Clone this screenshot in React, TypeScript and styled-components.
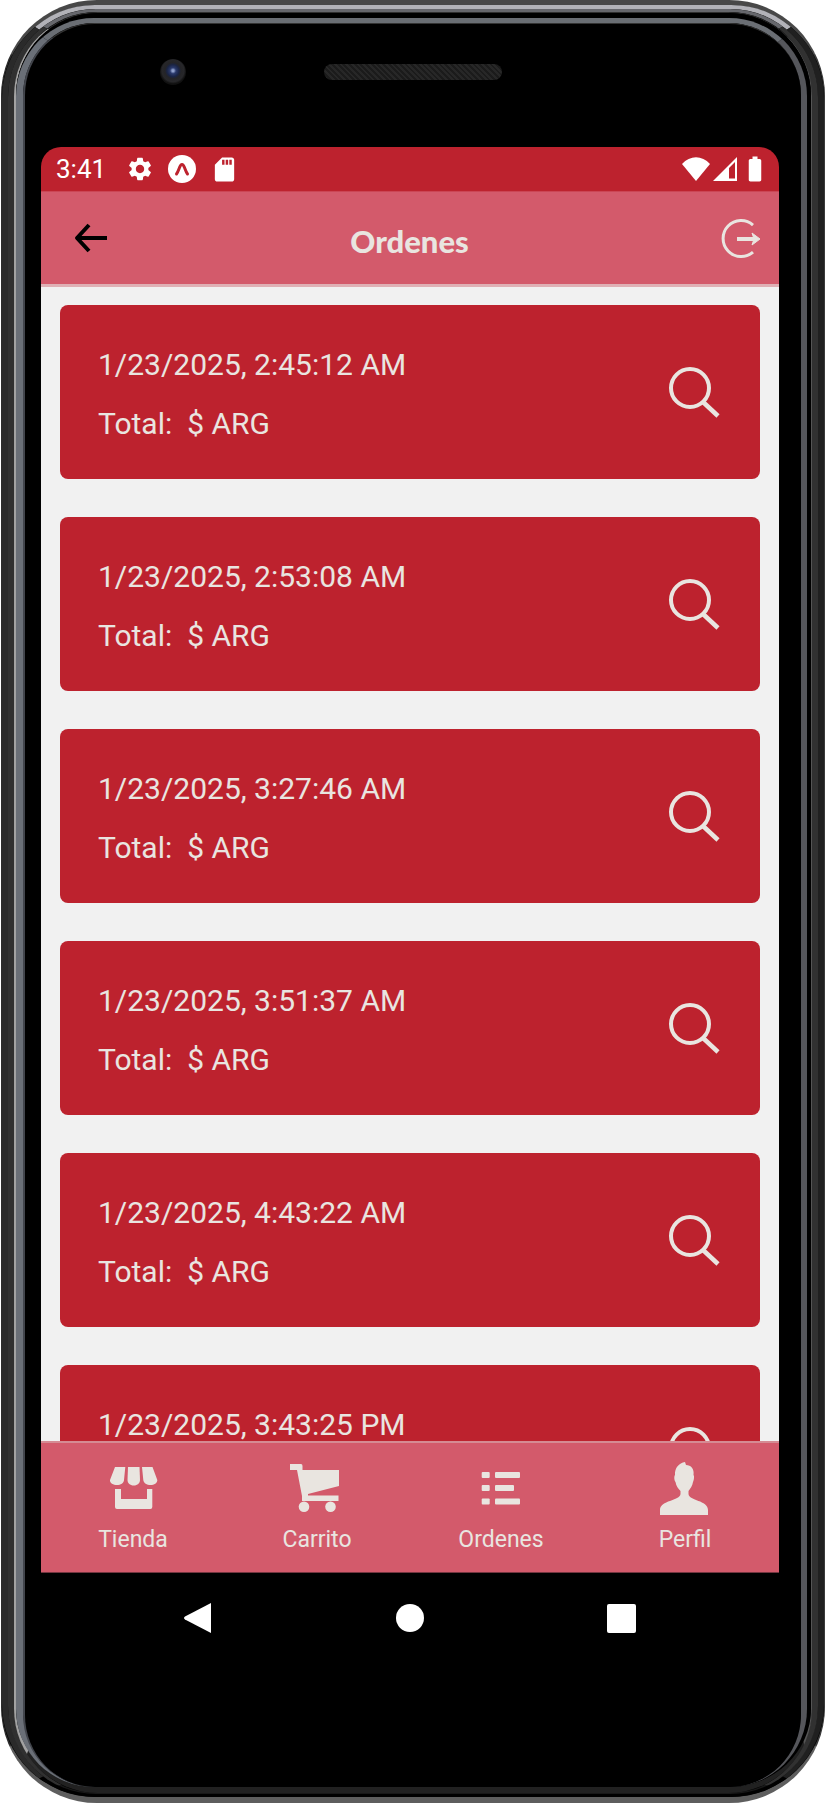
import React from 'react';
import styled, { createGlobalStyle } from 'styled-components';
import { MdBatteryFull, MdSdCard, MdSettings } from 'react-icons/md';

const color = {
  red: '#bd222e',
  pink: '#d35a6b',
  cream: '#e9e5e0',
  surface: '#f1f1f1',
};

const GlobalStyle = createGlobalStyle`
  * { box-sizing: border-box; }
  body { margin: 0; background: #fff; font-family: Roboto, sans-serif; }
  button { appearance: none; border: 0; padding: 0; margin: 0; background: none; color: inherit; font: inherit; cursor: pointer; }
  svg { display: block; flex: none; overflow: visible; }
`;

const Phone = styled.main`
  display: flex;
  flex-direction: column;
  height: 100vh;
  padding: 0 1px;
`;

const Ring = styled.div<{ $widths: string; $colors: string; $radius: number }>`
  display: flex;
  flex: 1;
  flex-direction: column;
  min-height: 0;
  background: #000;
  border-style: solid;
  border-width: ${(p) => p.$widths};
  border-color: ${(p) => p.$colors};
  border-radius: ${(p) => p.$radius}px;
`;

/* Metal case, from the outer edge to the glass. */
const rings = [
  { widths: '5px 1px 6px 1px', colors: '#484848 #3a3a3a #5e5e5e #2c2c2c', radius: 96 },
  { widths: '4px 6px 3px 6px', colors: '#b2b2b8 #202020 #000 #2a2a2a', radius: 93 },
  { widths: '3px 6px 1px 6px', colors: '#66676c #313131 #181818 #303030', radius: 88 },
  { widths: '1px 1px 6px 2px', colors: '#303030 #555 #212121 #a2a2a2', radius: 84 },
  { widths: '5px 4px 0 0', colors: '#000 #000 #000 #000', radius: 82 },
  { widths: '5px 6px 0 7px', colors: '#6a6e74 #55565b #000 #6a6f77', radius: 78 },
  { widths: '1px 0 0 2px', colors: '#333 #000 #000 #42454c', radius: 72 },
];

const Forehead = styled.div`
  display: grid;
  grid-template-columns: 1fr 178px 1fr;
  align-items: center;
  height: 123px;
  padding-bottom: 28px;
  flex: none;
`;

const Camera = styled.div`
  width: 26px;
  height: 26px;
  margin-left: 135px;
  border-radius: 50%;
  background: radial-gradient(circle at 50% 45%, #8fa0cc 0 1px, #2b3a6c 3px, #1a2445 6px, #242427 8px, #27272a 11px, #111 13px);
`;

const Speaker = styled.div`
  height: 16px;
  border-radius: 8px;
  background: repeating-linear-gradient(45deg, #1b1b1b 0 2px, #272727 2px 4px);
`;

const Screen = styled.div`
  display: flex;
  flex: 1;
  flex-direction: column;
  min-height: 0;
  margin: 0 22px 0 16px;
  border-radius: 20px 20px 0 0;
  overflow: hidden;
`;

const StatusBar = styled.div`
  display: flex;
  flex: none;
  align-items: center;
  justify-content: space-between;
  height: 44px;
  padding: 0 9px 0 15px;
  background: ${color.red};
  color: #fff;
`;

const StatusGroup = styled.div<{ $gap: number }>`
  display: flex;
  align-items: center;
  gap: ${(p) => p.$gap}px;
`;

const Clock = styled.time`
  margin-right: 6px;
  font-size: 26px;
  line-height: 32px;
`;

const Header = styled.header`
  display: grid;
  grid-template-columns: 1fr auto 1fr;
  flex: none;
  align-items: center;
  height: 96px;
  padding: 0 18px 0 33px;
  border-top: 1px solid #cb4655;
  border-bottom: 3px solid #dfb0b5;
  background: ${color.pink};
  color: ${color.cream};
`;

const Title = styled.h1`
  margin: 0 0 0 -16px;
  padding-top: 6px;
  font-family: Lato, sans-serif;
  font-size: 31px;
  font-weight: 900;
  line-height: 36px;
`;

const BackButton = styled.button`
  justify-self: start;
  color: #000;
`;

const LogoutButton = styled.button`
  justify-self: end;
`;

const OrderList = styled.ul`
  display: flex;
  flex: 1;
  flex-direction: column;
  gap: 38px;
  min-height: 0;
  margin: 0;
  padding: 18px 19px;
  background: ${color.surface};
  list-style: none;
  overflow-y: auto;
  scrollbar-width: none;
`;

const OrderCard = styled.li`
  display: flex;
  flex: none;
  align-items: center;
  justify-content: space-between;
  min-height: 174px;
  padding: 0 41px 0 38px;
  border-radius: 8px;
  background: ${color.red};
  color: ${color.cream};
`;

const OrderText = styled.div`
  align-self: flex-start;
  padding: 30px 0 26px;
`;

const OrderLine = styled.p`
  margin: 0;
  font-size: 30px;
  line-height: 59px;
  white-space: pre;
`;

const TabBar = styled.nav`
  display: grid;
  grid-template-columns: repeat(4, 1fr);
  flex: none;
  height: 132px;
  padding-right: 2px;
  border-top: 2px solid #d58b93;
  border-bottom: 1px solid #733640;
  background: ${color.pink};
`;

const Tab = styled.a`
  display: flex;
  flex-direction: column;
  align-items: center;
  gap: 12px;
  padding-top: 20px;
  color: ${color.cream};
  font-size: 23px;
  line-height: 30px;
  text-decoration: none;
`;

const SystemNav = styled.div`
  display: flex;
  flex: none;
  align-items: center;
  justify-content: center;
  gap: 183px;
  height: 90px;
  color: #fff;
`;

const Chin = styled.div`
  flex: none;
  height: 124px;
`;

const orders = [
  { date: '1/23/2025, 2:45:12 AM', total: '$ ARG' },
  { date: '1/23/2025, 2:53:08 AM', total: '$ ARG' },
  { date: '1/23/2025, 3:27:46 AM', total: '$ ARG' },
  { date: '1/23/2025, 3:51:37 AM', total: '$ ARG' },
  { date: '1/23/2025, 4:43:22 AM', total: '$ ARG' },
  { date: '1/23/2025, 3:43:25 PM', total: null },
];

const ShopIcon = () => (
  <>
    <path d="M7 4H17.3L16 17C16 20 12.500 22 9 22S1.500 20 2 17Z" />
    <path d="M20 4H31.500L32 17C32 20 29.500 22.500 25.700 22.500S19.500 20 19.500 17Z" />
    <path d="M34 4H44.500L49.300 17C49.500 20 46 22 42.500 22S35.500 20 35.300 17Z" />
    <path d="M7 26H13V36H39V26H44.300V44Q44.300 46 42.300 46H9Q7 46 7 44Z" />
  </>
);

const CartIcon = () => (
  <>
    <path d="M-2 1H9Q10.500 1 10.500 3V7H47V23L16 31V32.500H46.500V38H10V33L5 7H-2Z" />
    <circle cx="12" cy="43.700" r="5.300" />
    <circle cx="38.500" cy="43.700" r="5.300" />
  </>
);

const ListIcon = () => (
  <>
    {[
      [9, 25],
      [22, 19],
      [35.5, 25],
    ].map(([y, w]) => (
      <React.Fragment key={y}>
        <rect x="5.700" y={y} width="8" height="6" rx="1" />
        <rect x="19" y={y} width={w} height="6" rx="1" />
      </React.Fragment>
    ))}
  </>
);

const UserIcon = () => (
  <path d="M25 -1L26 2C31 2 34.500 6 33.500 12C34.500 13 34 17 33 19C32.500 23 30 26 28.500 28V31C29 38 48 37 48 47V52H0V47C0 37 20 38 20.500 31V28C18.500 26 16 23 15.500 19C14 17 14 13 15 12C14.500 5 19 0 25 -1Z" />
);

const tabs = [
  { label: 'Tienda', Icon: ShopIcon },
  { label: 'Carrito', Icon: CartIcon },
  { label: 'Ordenes', Icon: ListIcon },
  { label: 'Perfil', Icon: UserIcon },
];

const SearchIcon = () => (
  <svg width="50" height="50" fill="none" stroke="currentColor" strokeWidth="4">
    <circle cx="21" cy="21" r="19" />
    <path d="M34 35L49 49" strokeWidth="4.500" />
  </svg>
);

const ExpoIcon = () => (
  <svg width="28" height="28" viewBox="0 0 28 28">
    <circle cx="14" cy="14" r="14" fill="#fff" />
    <path d="M8.500 19C11 16 11.500 9.500 14 9.500S17 16 19.500 19" fill="none" stroke={color.red} strokeWidth="3" strokeLinecap="round" />
  </svg>
);

const OrdersScreen = () => (
  <Screen>
    <StatusBar>
      <StatusGroup $gap={14}>
        <Clock>3:41</Clock>
        <MdSettings size={28} />
        <ExpoIcon />
        <MdSdCard size={29} />
      </StatusGroup>
      <StatusGroup $gap={3}>
        <svg width="28" height="24" fill="currentColor">
          <path d="M0 7C8 -2 20 -2 28 7L14 24Z" />
        </svg>
        <svg width="24" height="24" fill="currentColor">
          <path fillRule="evenodd" d="M24 0V24H0ZM16 11V21.500H22V5Z" />
        </svg>
        <MdBatteryFull size={30} />
      </StatusGroup>
    </StatusBar>
    <Header>
      <BackButton aria-label="Volver">
        <svg width="33" height="28" fill="none" stroke="currentColor" strokeWidth="4">
          <path d="M15 1L3 14L15 27M3 14H33" strokeLinejoin="round" />
        </svg>
      </BackButton>
      <Title>Ordenes</Title>
      <LogoutButton aria-label="Cerrar sesión">
        <svg width="40" height="38" fill="none" stroke="currentColor" strokeWidth="3">
          <path d="M32 6A18 18 0 1 0 32 33" />
          <path d="M31 14L39 20L31 26L33 20Z" fill="currentColor" strokeWidth="1" />
          <path d="M16 20H36" strokeWidth="4" />
        </svg>
      </LogoutButton>
    </Header>
    <OrderList>
      {orders.map(({ date, total }) => (
        <OrderCard key={date}>
          <OrderText>
            <OrderLine>{date}</OrderLine>
            {total && <OrderLine>{`Total:  ${total}`}</OrderLine>}
          </OrderText>
          <button aria-label={`Ver orden ${date}`}>
            <SearchIcon />
          </button>
        </OrderCard>
      ))}
    </OrderList>
    <TabBar>
      {tabs.map(({ label, Icon }) => (
        <Tab key={label} href={`#${label.toLowerCase()}`}>
          <svg width="50" height="50" viewBox="0 0 50 50" fill="currentColor">
            <Icon />
          </svg>
          {label}
        </Tab>
      ))}
    </TabBar>
    <SystemNav>
      <button aria-label="Atrás">
        <svg width="28" height="32" fill="currentColor">
          <path d="M26 1V31L0 17.500Q-2 16 0 14.500Z" />
        </svg>
      </button>
      <button aria-label="Inicio">
        <svg width="28" height="28" fill="currentColor">
          <circle cx="14" cy="14" r="14" />
        </svg>
      </button>
      <button aria-label="Recientes">
        <svg width="28" height="28" fill="currentColor">
          <rect width="29" height="29" rx="2" />
        </svg>
      </button>
    </SystemNav>
    <Chin />
  </Screen>
);

export default function App() {
  const face = (
    <>
      <Forehead>
        <Camera />
        <Speaker />
      </Forehead>
      <OrdersScreen />
    </>
  );

  return (
    <>
      <GlobalStyle />
      <Phone>
        {rings.reduceRight<React.ReactNode>(
          (inner, ring) => (
            <Ring $widths={ring.widths} $colors={ring.colors} $radius={ring.radius}>
              {inner}
            </Ring>
          ),
          face,
        )}
      </Phone>
    </>
  );
}
